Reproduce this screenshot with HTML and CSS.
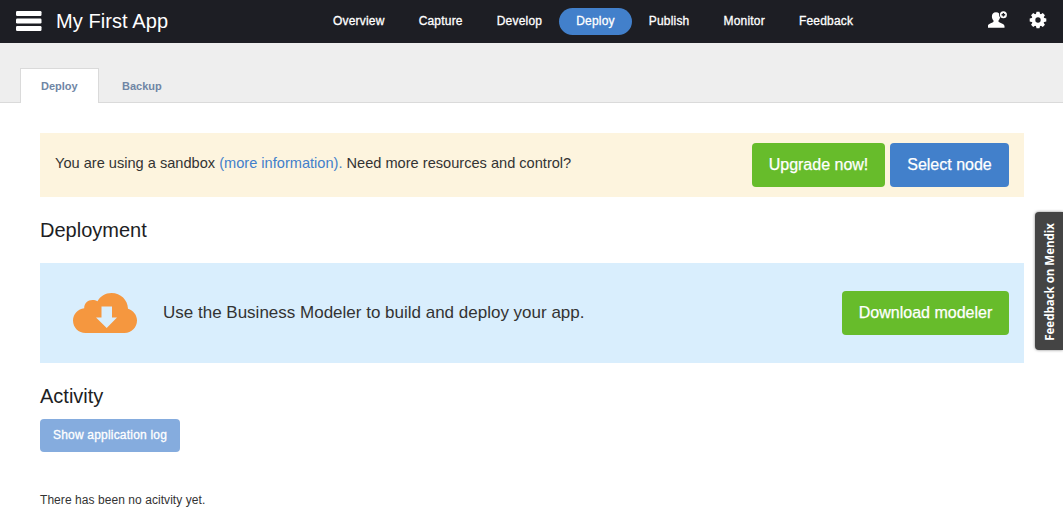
FILE: index.html
```html
<!DOCTYPE html>
<html lang="en">
<head>
<meta charset="utf-8">
<title>My First App</title>
<link rel="stylesheet" href="styles.css">
</head>
<body>
<header class="topbar">
  <div class="brand">
    <svg class="menu-icon" width="26" height="20" viewBox="0 0 26 20" fill="#fff"><rect width="25.500" height="5" rx="1.200"/><rect y="7.500" width="25.500" height="5" rx="1.200"/><rect y="15" width="25.500" height="5" rx="1.200"/></svg>
    <span class="app-name">My First App</span>
  </div>
  <nav class="nav">
    <a class="nav-item">Overview</a>
    <a class="nav-item">Capture</a>
    <a class="nav-item">Develop</a>
    <a class="nav-item active">Deploy</a>
    <a class="nav-item">Publish</a>
    <a class="nav-item">Monitor</a>
    <a class="nav-item">Feedback</a>
  </nav>
  <div class="tools">
    <svg width="20" height="18" viewBox="0 0 20 18"><path fill="#fff" d="M8 1.200c2.800 0 4.100 1.800 4.100 4.200 0 1.600-.7 3.200-1.600 4.100v1c0 1.300 5.600 1.700 6 4.600v1.700H-.3v-1.700C.1 12.200 5.500 11.800 5.500 10.500v-1C4.600 8.600 3.900 7 3.900 5.400 3.900 3 5.200 1.200 8 1.200z"/><circle cx="15.400" cy="3.700" r="4.300" fill="#1d1e24"/><circle cx="15.400" cy="3.700" r="3.500" fill="#fff"/><path d="M15.400 1.900v3.600M13.600 3.700h3.600" stroke="#1d1e24" stroke-width="1.400"/></svg>
    <svg width="18" height="18" viewBox="0 0 18 18"><g fill="#fff"><circle cx="9" cy="9" r="6.400"/><path d="M7.500.7h3l.7 3H6.800zM7.500 17.300h3l.7-3H6.800z"/><path d="M7.500.7h3l.7 3H6.800zM7.500 17.300h3l.7-3H6.800z" transform="rotate(45 9 9)"/><path d="M7.500.7h3l.7 3H6.800zM7.500 17.300h3l.7-3H6.800z" transform="rotate(90 9 9)"/><path d="M7.500.7h3l.7 3H6.800zM7.500 17.300h3l.7-3H6.800z" transform="rotate(135 9 9)"/></g><circle cx="9" cy="9" r="2.700" fill="#1d1e24"/></svg>
  </div>
</header>
<div class="tabs">
  <a class="tab selected">Deploy</a>
  <a class="tab">Backup</a>
</div>
<main class="content">
  <section class="notice">
    <p class="notice-text">You are using a sandbox <a class="link">(more information).</a> Need more resources and control?</p>
    <div class="actions">
      <button class="btn green upgrade">Upgrade now!</button>
      <button class="btn blue select">Select node</button>
    </div>
  </section>
  <h2 class="heading deployment">Deployment</h2>
  <section class="modeler">
    <svg class="cloud" width="64" height="40" viewBox="0 0 64 40"><path fill="#f5973f" d="M12.500 40C5.500 40 0 34.500 0 27.500 0 21 5 15.700 11.200 15.200 11 10.500 14.800 7 19.500 7c1.900 0 3.600.4 5 1.300C27.300 3.200 32.400 0 38.500 0 47.700 0 54.800 7 55 15.800c5.300 1.700 9 6.300 9 11.800C64 34.500 58.500 40 51.500 40z"/><path fill="#d9eefd" d="M28.500 13.500h10.500v11h5L33.700 35 23 24.500h5.500z"/></svg>
    <p class="modeler-text">Use the Business Modeler to build and deploy your app.</p>
    <button class="btn green download">Download modeler</button>
  </section>
  <h2 class="heading activity">Activity</h2>
  <button class="log">Show application log</button>
  <p class="empty">There has been no acitvity yet.</p>
</main>
<aside class="feedback"><span class="feedback-label">Feedback on Mendix</span></aside>
</body>
</html>
```
FILE: styles.css
```css
* { box-sizing: border-box; }
body { margin: 0; height: 518px; overflow: hidden; background: #fff; color: #1d1e24; font-family: "Liberation Sans", Arial, sans-serif; }
p, h2 { margin: 0; font-weight: normal; }
button { border: 0; padding: 0; color: #fff; font-family: inherit; white-space: nowrap; }
.topbar { display: flex; height: 43px; padding: 0 16px 0 15.5px; background: #1d1e24; color: #fff; }
.brand { display: flex; width: 300.5px; gap: 14.5px; }
.menu-icon { margin-top: 11px; }
.app-name { font-size: 20px; line-height: 42px; letter-spacing: .08px; }
.nav { display: flex; height: 27px; margin-top: 8px; }
.nav-item { padding: 0 17px; border-radius: 14px; font-size: 12px; line-height: 26px; letter-spacing: .2px; -webkit-text-stroke: .3px #fff; }
.active { background: #4280cb; }
.tools { display: flex; gap: 21px; margin: 11px 0 0 auto; }
.tabs { display: flex; height: 60px; padding: 25px 20px 0; background: #eee; border-bottom: 1px solid #dadada; }
.tab { height: 35px; padding: 0 20px; border: 1px solid transparent; border-bottom: 0; color: #6f86a5; font-size: 11px; font-weight: bold; line-height: 35px; }
.selected { width: 79px; margin-right: 2px; background: #fff; border-color: #dadada; }
.content { padding: 30px 39px 0 40px; }
.notice { display: flex; height: 64px; justify-content: space-between; padding: 10px 15px; background: #fdf4de; }
.notice-text { color: #333; font-size: 14.6px; line-height: 41px; }
.link { color: #4280cb; }
.actions { display: flex; gap: 5px; }
.btn { height: 44px; border-radius: 4px; font-size: 16px; -webkit-text-stroke: .25px #fff; }
.green { background: #67bc2b; }
.blue { background: #4280cb; }
.upgrade { width: 133px; }
.select { width: 119px; }
.heading { font-size: 20px; line-height: 24px; }
.deployment { margin: 21px 0; }
.modeler { display: flex; align-items: center; height: 100px; padding: 0 15px 0 33px; background: #d9eefd; }
.modeler-text { margin: 0 auto 0 26px; color: #333; font-size: 17px; line-height: 20px; }
.download { width: 167px; }
.activity { margin: 21px 0 11px; }
.log { display: block; width: 140px; height: 33px; padding-bottom: 2px; border-radius: 4px; background: #85acde; font-size: 12px; letter-spacing: .2px; -webkit-text-stroke: .3px #fff; }
.empty { margin-top: 40px; color: #333; font-size: 12px; line-height: 16px; letter-spacing: .06px; }
.feedback { position: absolute; top: 212px; right: 0; display: flex; align-items: center; justify-content: center; width: 28px; height: 138px; padding-top: 2px; border-radius: 4px 0 0 4px; background: #444; box-shadow: 0 0 3px rgba(0, 0, 0, .5); }
.feedback-label { writing-mode: vertical-rl; transform: rotate(180deg); color: #fff; font: 700 11.5px "Open Sans", sans-serif; white-space: nowrap; }
```
